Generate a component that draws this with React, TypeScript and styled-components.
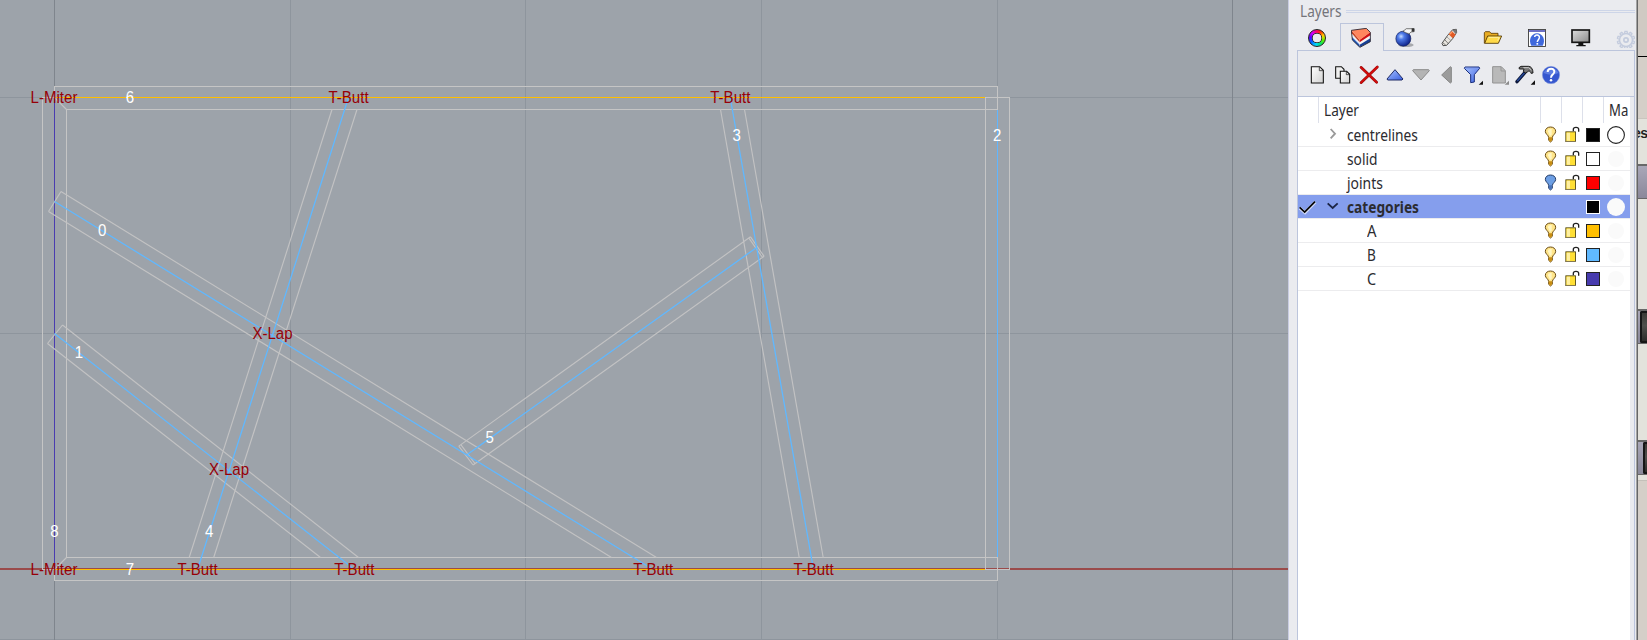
import React from "react";
import styled, { createGlobalStyle, css } from "styled-components";

const GlobalStyle = createGlobalStyle`
  * { box-sizing: border-box; }
  html, body { margin: 0; padding: 0; overflow: hidden; }
  svg { display: block; flex: none; }
`;

const uiFont = `"Noto Sans", "Open Sans", sans-serif`;

const Screen = styled.div`
  display: flex;
  width: 1647px;
  height: 640px;
  overflow: hidden;
  background: #eaebef;
  font-family: ${uiFont};
`;

const Viewport = styled.main`
  width: 1288px;
  height: 640px;
  background: #9da3aa;
`;

const Drawing = styled.svg`
  font-family: "Liberation Sans", Arial, sans-serif;
  font-size: 15.6px;
`;

/* ---------- model view ---------- */

type Line = [number, number, number, number];

const GRID_X = [290, 525, 761, 997];
const GRID_Y = [97, 333, 639];

const solidEdges: Line[] = [
  [54, 86, 997, 86], [997, 86, 997, 109], [66, 109, 997, 109], [54, 86, 54, 97],
  [42, 97, 54, 97], [42, 97, 42, 569], [66, 109, 66, 557], [42, 569, 54, 569],
  [66, 557, 997, 557], [54, 580, 997, 580], [54, 569, 54, 580], [997, 557, 997, 580],
  [985, 97, 985, 569], [1009, 97, 1009, 569], [985, 97, 1009, 97], [985, 569, 1009, 569],
];

const slantedEdges: Line[] = [
  [54, 97, 66, 109], [66, 557, 54, 569],
  [60.5, 191, 656, 557], [48, 211, 611, 557], [60.5, 191, 48, 211],
  [62, 324.5, 358, 557], [47, 343, 320, 557], [62, 324.5, 47, 343],
  [331.5, 109, 188.7, 557], [356.5, 109, 213.2, 557],
  [720, 109, 798.7, 557], [744, 109, 822.7, 557],
  [750, 236.3, 458.3, 445.6], [763.6, 255.8, 472.6, 464.5],
  [750, 236.3, 763.6, 255.8], [748.4, 237.7, 762, 257],
  [458.3, 445.6, 472.6, 464.5], [460.3, 444.2, 474.5, 463.2],
];

const centreLines: Line[] = [
  [54, 201, 652.5, 569], [54, 333, 354, 569], [348, 97, 197, 569],
  [729.7, 97, 813, 569], [756.5, 246.7, 465.7, 454.7],
];

const joints: [string, number, number][] = [
  ["L-Miter", 54, 103], ["T-Butt", 348.5, 103], ["T-Butt", 730.3, 103],
  ["X-Lap", 272.5, 339], ["X-Lap", 229, 474.5],
  ["L-Miter", 54, 574.5], ["T-Butt", 197.5, 574.5], ["T-Butt", 354.3, 574.5],
  ["T-Butt", 653.2, 574.5], ["T-Butt", 813.5, 574.5],
];

const members: [string, number, number][] = [
  ["0", 102.3, 236], ["1", 79, 357.5], ["2", 997.3, 141], ["3", 736.8, 141],
  ["4", 209.3, 537], ["5", 489.7, 443], ["6", 130, 103], ["7", 130, 574.5], ["8", 54.5, 537],
];

const seg = ([x1, y1, x2, y2]: Line) => `M${x1 + 0.5} ${y1 + 0.5}L${x2 + 0.5} ${y2 + 0.5}`;
const path = (lines: Line[]) => lines.map(seg).join("");
const LABEL_STRETCH = 0.965;

const Tag = ({ t, x, y }: { t: string; x: number; y: number }) => (
  <text transform={`translate(${x} ${y}) scale(${LABEL_STRETCH} 1)`}>{t}</text>
);

function ModelView() {
  return (
    <Viewport>
      <Drawing width="1288" height="640" viewBox="0 0 1288 640" fill="none">
        <g shapeRendering="crispEdges">
          <path stroke="#8e959d" d={path([...GRID_X.map((x): Line => [x, -1, x, 640]), ...GRID_Y.map((y): Line => [-1, y, 1288, y])])} />
          <path stroke="#7f858d" d="M54.5 0V640M1232.5 0V640" />
          <path stroke="#9a4b4b" strokeWidth="2" d="M0 569H1288" />
          <path stroke="#4a3cb0" d="M54.5 97V569" />
          <path stroke="#60b6ff" d="M997.5 109V557" />
          <path stroke="#ffbf00" d="M54 97.5H985M54 569.5H985" />
          <path stroke="#c5c5c5" strokeLinecap="square" d={path(solidEdges)} />
        </g>
        <path stroke="#c2c2c3" strokeWidth="1.15" d={path(slantedEdges)} />
        <path stroke="#60b8ff" strokeWidth="1.3" d={path(centreLines)} />
        <g fill="#960008" textAnchor="middle">
          {joints.map(([t, x, y], i) => <Tag key={i} t={t} x={x} y={y} />)}
        </g>
        <g fill="#ffffff" textAnchor="middle">
          {members.map(([t, x, y]) => <Tag key={t} t={t} x={x} y={y} />)}
        </g>
      </Drawing>
    </Viewport>
  );
}

/* ---------- tab icons (60 x 60 units) ---------- */

const TabSvg = ({ children }: { children: React.ReactNode }) => (
  <svg width="20" height="20" viewBox="0 0 60 60" fill="none">{children}</svg>
);

const Wheel = styled.div`
  width: 18px;
  height: 18px;
  margin-top: 1px;
  border-radius: 50%;
  border: 1px solid #222;
  background:
    radial-gradient(circle, #eaebef 0 4.2px, #333 4.6px 4.9px, transparent 5.4px),
    conic-gradient(#ff0060, #ff3000 30deg, #ffd000 70deg, #60f000 110deg, #00e070 150deg, #00d8ff 190deg, #0060ff 235deg, #5a00ff 275deg, #d000ff 315deg, #ff0060);
`;

const LayersIcon = () => (
  <TabSvg>
    <path d="M1 7L26 36V58L4 35Z" fill="#e9edf5" />
    <path d="M1 7L26 36V43L2 16Z" fill="#c9421f" />
    <path d="M3 27L26 50V58L4 36Z" fill="#2058bb" />
    <path d="M26 36L58 13V40L26 58Z" fill="#f5f5f5" />
    <path d="M26 35L58 12V22L26 43Z" fill="#cf1014" />
    <path d="M26 50L58 31V41L26 58Z" fill="#163f96" />
    <path d="M1 7L46 1L58 13L26 36Z" fill="#ff865e" />
    <path d="M1 7L46 1L58 13V41L27 58L4 36Z" stroke="#262430" strokeWidth="2.600" strokeLinejoin="round" />
  </TabSvg>
);

const SphereIcon = () => (
  <TabSvg>
    <defs>
      <radialGradient id="ball" cx=".35" cy=".35" r=".7">
        <stop offset="0" stopColor="#c8dcff" /><stop offset=".3" stopColor="#4f7be8" /><stop offset="1" stopColor="#0b1f86" />
      </radialGradient>
    </defs>
    <ellipse cx="33" cy="51" rx="23" ry="6" fill="#8b8d92" opacity=".7" />
    <circle cx="25" cy="32" r="22.5" fill="url(#ball)" stroke="#14235e" strokeWidth="2" />
    <path d="M24 10L34 2H57V11L48 12L42 18L32 14Z" fill="#eee" stroke="#333" strokeWidth="1.800" />
    <path d="M50 1H58V11H50Z" fill="#333" />
    <path d="M36 6H49L44 12H32Z" fill="#fafafa" />
  </TabSvg>
);

const TubeIcon = () => (
  <TabSvg>
    <path d="M9 46L26 22L41 5L52 4L53 13L41 32L23 52L12 53Z" fill="#e9e6e0" stroke="#333" strokeWidth="2.500" />
    <path d="M29 19L38 9L50 20L41 31Z" fill="#e25a24" />
    <path d="M32 19L39 12" stroke="#ff9a66" strokeWidth="4" />
    <path d="M40 6L52 4L53 12L49 17Z" fill="#777" />
    <path d="M17 35L28 47M11 44L20 51" stroke="#444" strokeWidth="2" />
    <path d="M24 27L36 38" stroke="#888" strokeWidth="2" />
  </TabSvg>
);

const FolderIcon = () => (
  <TabSvg>
    <path d="M4 46V14L7 11H20L24 16H45V24H55" fill="#e8ac22" />
    <path d="M4 46V14L7 11H20L24 16H45V25" stroke="#5b3b00" strokeWidth="2.500" />
    <path d="M14 24H56L46 46H5Z" fill="#ffda4a" stroke="#4a3000" strokeWidth="2.500" />
    <path d="M17 28H49L44 38" stroke="#fff0a0" strokeWidth="3" />
  </TabSvg>
);

const HelpWindowIcon = () => (
  <TabSvg>
    <rect x="4.500" y="4.500" width="51" height="51" fill="#fff" stroke="#333" strokeWidth="2.600" />
    <path d="M6 6H54V12H6Z" fill="#6d70c4" />
    <path d="M13 53C3 36 13 16 30 16S57 36 47 53Z" fill="#3f68dc" />
    <path d="M23 27C24 19 38 19 37 29C36 36 31 36 31 42" stroke="#fff" strokeWidth="4.500" />
    <rect x="28.500" y="45" width="5" height="5" fill="#fff" />
  </TabSvg>
);

const MonitorIcon = () => (
  <TabSvg>
    <defs>
      <linearGradient id="screen" x1="0" y1="0" x2="1" y2="1">
        <stop offset="0" stopColor="#ddd" /><stop offset="1" stopColor="#8b8b8b" />
      </linearGradient>
    </defs>
    <path d="M22 44H37V51H44V55H16V51H22Z" fill="#141414" />
    <rect x="3" y="6" width="52" height="37" fill="url(#screen)" stroke="#161616" strokeWidth="5" />
  </TabSvg>
);

const GearIcon = () => (
  <TabSvg>
    <g transform="translate(33 36)" stroke="#c3cbdd">
      {Array.from({ length: 10 }, (_, i) => (
        <path key={i} d="M-4.500-21L-3-26H3L4.500-21" strokeWidth="4" transform={`rotate(${i * 36})`} />
      ))}
      <circle r="19.500" strokeWidth="4.500" />
      <circle r="6.500" strokeWidth="5" />
    </g>
  </TabSvg>
);

/* ---------- toolbar icons (78 x 60 units) ---------- */

const ToolSvg = ({ children }: { children: React.ReactNode }) => (
  <svg width="26" height="20" viewBox="0 0 78 60" fill="none">{children}</svg>
);

const ToolDefs = () => (
  <defs>
    <linearGradient id="paper" x1="0" y1="0" x2="1" y2="1"><stop offset="0" stopColor="#fff" /><stop offset="1" stopColor="#d2d2d2" /></linearGradient>
    <linearGradient id="blue" x1="0" y1="0" x2="1" y2="1"><stop offset="0" stopColor="#a9c4ff" /><stop offset="1" stopColor="#3a5fe0" /></linearGradient>
  </defs>
);

const NewIcon = () => (
  <ToolSvg><ToolDefs />
    <path d="M22 5H47L58 16V54H22Z" fill="url(#paper)" stroke="#111" strokeWidth="3.200" />
    <path d="M46 6V17H57" stroke="#333" strokeWidth="2.500" />
  </ToolSvg>
);
const CopyIcon = () => (
  <ToolSvg>
    <path d="M17 5H34L42 13V40H17Z" fill="#efefef" stroke="#111" strokeWidth="3.200" />
    <path d="M31 19H50L59 28V54H31Z" fill="url(#paper)" stroke="#111" strokeWidth="3.200" />
    <path d="M49 20V29H58" stroke="#333" strokeWidth="2.500" />
  </ToolSvg>
);
const DeleteIcon = () => (
  <ToolSvg>
    <path d="M15 7L62 52M64 6L15 53" stroke="#8b0a0a" strokeWidth="8" strokeLinecap="round" />
    <path d="M15 7L62 52M64 6L15 53" stroke="#d40c0c" strokeWidth="5.500" strokeLinecap="round" />
  </ToolSvg>
);
const UpIcon = () => <ToolSvg><path d="M39 14L63 42L60 45H17L15 42Z" fill="url(#blue)" stroke="#1e2a66" strokeWidth="3" strokeLinejoin="round" /></ToolSvg>;
const DownIcon = () => <ToolSvg><path d="M14 17L16 14H62L64 17L39 45Z" fill="#b4b4b4" stroke="#8b8b8b" strokeWidth="3" strokeLinejoin="round" /></ToolSvg>;
const BackIcon = () => <ToolSvg><path d="M23 30L49 5L52 7V52L49 54Z" fill="#9b9b9b" stroke="#868686" strokeWidth="3" strokeLinejoin="round" /></ToolSvg>;
const FilterIcon = () => (
  <ToolSvg>
    <path d="M15 6H57L59 10L43 29V51L32 53V29L13 10Z" fill="url(#blue)" stroke="#1b2f7c" strokeWidth="3" strokeLinejoin="round" />
    <path d="M16 10H56" stroke="#7f9af0" strokeWidth="3" />
    <path d="M69 47V59H56Z" fill="#111" />
  </ToolSvg>
);
const StateIcon = () => (
  <ToolSvg>
    <path d="M20 5H46L58 17V54H20Z" fill="#b9b9b9" stroke="#929292" strokeWidth="3" />
    <path d="M45 6V18H57" stroke="#929292" strokeWidth="2.500" />
    <path d="M69 47V59H56Z" fill="#8b8b8b" />
  </ToolSvg>
);
const HammerIcon = () => (
  <ToolSvg>
    <path d="M15 50L39 22" stroke="#0d1738" strokeWidth="10" strokeLinecap="round" />
    <path d="M16 48L38 23" stroke="#24499c" strokeWidth="4" />
    <path d="M21 8L27 4H50C58 5 63 12 63 24L57 25C55 18 51 16 46 21L40 24L34 19L36 12H22Z" fill="#777" stroke="#1c1c1c" strokeWidth="3" strokeLinejoin="round" />
    <path d="M34 8H50L58 15" stroke="#c9c9c9" strokeWidth="3" />
    <path d="M69 46V59H56Z" fill="#111" />
  </ToolSvg>
);
const HelpIcon = () => (
  <ToolSvg>
    <circle cx="39" cy="30" r="26" fill="#3657cf" stroke="#8fa2dc" strokeWidth="1.500" />
    <path d="M17 24A23 20 0 0 1 61 24Q40 34 17 24Z" fill="#7f9cf0" opacity=".55" />
    <path d="M29 21C29 8 50 8 49 21C48 29 39 29 39 38" stroke="#fff" strokeWidth="6" />
    <circle cx="39" cy="46" r="3.800" fill="#fff" />
  </ToolSvg>
);

/* ---------- layers panel ---------- */

const Panel = styled.aside`
  display: flex;
  flex-direction: column;
  width: 348px;
  height: 640px;
  padding-left: 8px;
  border-left: 1px solid #c9cce2;
  background: #eaebef;
`;

const TitleBar = styled.header`
  display: flex;
  align-items: flex-start;
  height: 22px;
  padding-left: 3px;
`;

const Title = styled.span`
  width: 46px;
  font-size: 16px;
  line-height: 23px;
  color: #74747a;
  white-space: nowrap;
  transform: scaleX(0.85);
  transform-origin: 0 50%;
`;

const TitleRule = styled.div`
  flex: 1;
  height: 3px;
  margin: 10px 1px 0 0;
  border: solid #cdd5e8;
  border-width: 1px 0;
`;

const TabStrip = styled.nav`
  display: flex;
  height: 28px;
  margin-left: -2px;
  overflow: hidden;
`;

const Tab = styled.div<{ $active?: boolean }>`
  position: relative;
  display: flex;
  flex: none;
  align-items: flex-start;
  justify-content: center;
  width: 44px;
  padding-top: 6px;
  ${(p) => p.$active && css`
    &::before {
      content: "";
      position: absolute;
      inset: 1px -1px 0 1px;
      border: 1px solid #bcc5dc;
      border-bottom: 0;
    }
  `}
`;

const TabPage = styled.section`
  display: flex;
  flex-direction: column;
  flex: 1;
  width: 338px;
  border: 1px solid #bcc5dc;
  border-width: 1px 1px 0 1px;
`;

/* Hides the page border under the active tab. */
const TabGap = styled.div`
  width: 42px;
  height: 1px;
  margin: -1px 0 0 43px;
  background: #eaebef;
`;

const Toolbar = styled.div`
  display: flex;
  height: 45px;
  padding: 14px 0 0 6px;
`;

const ListFrame = styled.div`
  display: flex;
  flex: 1;
  border-top: 1px solid #bcc5dc;
`;

const ListBody = styled.div`
  width: 332px;
  background: #fff;
`;

const rowGrid = css`
  display: grid;
  grid-template-columns: 21px 222px 21px 21px 21px 26px;
`;

const HeaderRow = styled.div`
  ${rowGrid}
  height: 26px;
`;

const HeaderCell = styled.div`
  height: 26px;
  padding-left: 5px;
  overflow: hidden;
  border-right: 1px solid #dde0ea;
  &:last-child { border-right: 0; }
`;

const Label = styled.span<{ $bold?: boolean; $scale?: number; $line?: number }>`
  display: inline-block;
  font-size: ${(p) => (p.$bold ? 15.5 : 16)}px;
  font-weight: ${(p) => (p.$bold ? 700 : 400)};
  line-height: ${(p) => p.$line ?? 23}px;
  color: #2b2b30;
  white-space: nowrap;
  transform: scaleX(${(p) => p.$scale ?? 0.85});
  transform-origin: 0 50%;
`;

const Row = styled.div<{ $selected?: boolean }>`
  ${rowGrid}
  align-items: center;
  height: 24px;
  border-bottom: 1px solid #ececee;
  background: ${(p) => (p.$selected ? "#859eed" : "#fff")};
`;

const NameCell = styled.div<{ $depth: number }>`
  display: flex;
  align-items: flex-start;
  height: 23px;
  padding-left: ${(p) => 6 + p.$depth * 20}px;

  ${Label} { padding-top: 1px; }
`;

const Expander = styled.div`
  width: 22px;
  height: 23px;
`;

const IconCell = styled.div<{ $shift?: number }>`
  display: flex;
  align-items: center;
  justify-content: center;
  height: 23px;
  padding-right: ${(p) => (p.$shift ?? 0) * 2}px;
`;

const Swatch = styled.div<{ $color: string; $selected?: boolean }>`
  flex: none;
  width: 14px;
  height: 14px;
  border: 1px solid ${(p) => (p.$selected ? "#fff" : "#222")};
  background: ${(p) => p.$color};
`;

type Kind = "ring" | "faint" | "solid";

const Material = ({ kind }: { kind: Kind }) => (
  <svg width="18" height="18" viewBox="0 0 18 18">
    {kind === "ring"
      ? <circle cx="9" cy="9" r="8.400" fill="#fff" stroke="#222" strokeWidth="1.1" />
      : <circle cx="9" cy="9" r={kind === "solid" ? 9 : 8} fill="#fafafa" />}
  </svg>
);

interface Layer {
  name: string;
  color: string;
  depth: number;
  bulb?: "on" | "off";
  kind: Kind;
  expand?: "open" | "closed";
  selected?: boolean;
  scale: number;
}

const layers: Layer[] = [
  { name: "centrelines", color: "#000", depth: 0, bulb: "on", kind: "ring", expand: "closed", scale: 0.86 },
  { name: "solid", color: "#fff", depth: 0, bulb: "on", kind: "faint", scale: 0.86 },
  { name: "joints", color: "#f00", depth: 0, bulb: "off", kind: "faint", scale: 0.87 },
  { name: "categories", color: "#000", depth: 0, kind: "solid", expand: "open", selected: true, scale: 0.885 },
  { name: "A", color: "#ffbf00", depth: 1, bulb: "on", kind: "faint", scale: 0.93 },
  { name: "B", color: "#60b9ff", depth: 1, bulb: "on", kind: "faint", scale: 0.85 },
  { name: "C", color: "#473bae", depth: 1, bulb: "on", kind: "faint", scale: 0.9 },
];

const Bulb = ({ on }: { on: boolean }) => (
  <svg width="13" height="17" viewBox="0 0 39 51" fill="none">
    <path d="M14 34C13 27 4 24 4 16C4 8 11 3 19.500 3S35 8 35 16C35 24 26 27 25 34V43L19.500 48L14 43Z" fill={on ? "#ffe58a" : "#6d9fe4"} stroke={on ? "#6b4c13" : "#253c66"} strokeWidth="3" />
    {on && <path d="M12 16C12 10 17 8 23 9V26L18 30Z" fill="#fff6c4" />}
    <path d="M14.500 34H24.500V42L19.500 47L14.500 42Z" fill={on ? "#c98d12" : "#4a73b8"} />
  </svg>
);

const Lock = () => (
  <svg width="15" height="17" viewBox="0 0 45 51" fill="none">
    <path d="M25 16V10C25 2 41 2 41 10V17" stroke="#222" strokeWidth="4" />
    <rect x="2.500" y="17.500" width="29" height="29" fill="#ffdf35" stroke="#4d4310" strokeWidth="2.600" />
    <rect x="5" y="20" width="10" height="24" fill="#fff0a0" />
    <path d="M1 46.500H33" stroke="#857950" strokeWidth="3" />
  </svg>
);

const Check = () => (
  <svg width="20" height="16" viewBox="0 0 60 48" fill="none">
    <path d="M5 27L21 41L52 9" stroke="#fff" strokeWidth="9" opacity=".65" />
    <path d="M5 25L20 39L51 8" stroke="#050505" strokeWidth="5" />
  </svg>
);

const Chevron = ({ open }: { open: boolean }) => (
  <svg width="16" height="20" viewBox="0 0 48 60" fill="none">
    {open
      ? <path d="M8 25L23 39L38 25" stroke="#1c2545" strokeWidth="5.500" />
      : <path d="M17 18L30 32L17 46" stroke="#9a9a9a" strokeWidth="5.500" />}
  </svg>
);

function LayersPanel() {
  const tabs = [Wheel, LayersIcon, SphereIcon, TubeIcon, FolderIcon, HelpWindowIcon, MonitorIcon, GearIcon];
  return (
    <Panel>
      <TitleBar><Title>Layers</Title><TitleRule /></TitleBar>
      <TabStrip>
        {tabs.map((Icon, i) => <Tab key={i} $active={i === 1}><Icon /></Tab>)}
      </TabStrip>
      <TabPage>
        <TabGap />
        <Toolbar>
          <NewIcon /><CopyIcon /><DeleteIcon /><UpIcon /><DownIcon /><BackIcon />
          <FilterIcon /><StateIcon /><HammerIcon /><HelpIcon />
        </Toolbar>
        <ListFrame>
          <ListBody>
            <HeaderRow>
              <HeaderCell />
              <HeaderCell><Label $line={27}>Layer</Label></HeaderCell>
              <HeaderCell /><HeaderCell /><HeaderCell />
              <HeaderCell><Label $line={27} $scale={0.82}>Ma</Label></HeaderCell>
            </HeaderRow>
            {layers.map((l) => (
              <Row key={l.name} $selected={l.selected}>
                <IconCell $shift={1}>{l.selected && <Check />}</IconCell>
                <NameCell $depth={l.depth}>
                  <Expander>{l.expand && <Chevron open={l.expand === "open"} />}</Expander>
                  <Label $bold={l.selected} $scale={l.scale}>{l.name}</Label>
                </NameCell>
                <IconCell $shift={1}>{l.bulb && <Bulb on={l.bulb === "on"} />}</IconCell>
                <IconCell>{l.bulb && <Lock />}</IconCell>
                <IconCell $shift={1}><Swatch $color={l.color} $selected={l.selected} /></IconCell>
                <IconCell $shift={1}><Material kind={l.kind} /></IconCell>
              </Row>
            ))}
          </ListBody>
        </ListFrame>
      </TabPage>
    </Panel>
  );
}

/* ---------- sliver of the window behind ---------- */

const Edge = styled.aside`
  display: flex;
  flex-direction: column;
  width: 11px;
  height: 640px;
  overflow: hidden;
  border-left: 1px solid #a3a3a3;
  box-shadow: inset 1px 0 0 #666;
  padding-left: 1px;
  background: #d5cfc8;
`;

const Block = styled.div<{ $h: number; $bg: string; $line?: string }>`
  flex: none;
  height: ${(p) => p.$h}px;
  background: ${(p) => p.$bg};
  ${(p) => p.$line && css`border-bottom: 1px solid ${p.$line};`}
`;

const ClippedText = styled(Block)`
  overflow: hidden;
  font: bold 14px/28px "Liberation Sans", Arial, sans-serif;
  letter-spacing: -0.5px;
  color: #222;
  text-indent: -5px;
  white-space: nowrap;
`;

const Band = styled.div<{ $inset: number }>`
  flex: none;
  height: 35px;
  padding-left: ${(p) => p.$inset}px;
  border: solid #686868;
  border-width: 2px 0 1px;
  background: linear-gradient(#a9a7b8, #8a889a);
`;

const DarkButton = styled.div`
  height: 32px;
  border: 2px solid #161616;
  border-right: 0;
  border-radius: 2px 0 0 2px;
  background: linear-gradient(#3a3a36, #50504c 45%, #2c2c2a);
`;

function WindowEdge() {
  return (
    <Edge>
      <Block $h={57} $bg="#d0cac3" $line="#000" />
      <Block $h={62} $bg="#d5cfc8" $line="#c9c5be" />
      <ClippedText $h={45} $bg="#e3e2dc">es</ClippedText>
      <Band $inset={12} />
      <Block $h={110} $bg="#e3e2dc" />
      <Band $inset={2}><DarkButton /></Band>
      <Block $h={96} $bg="#e3e2dc" />
      <Band $inset={5}><DarkButton /></Band>
      <Block $h={6} $bg="#e3e2dc" $line="#c4c0b9" />
    </Edge>
  );
}

export default function App() {
  return (
    <>
      <GlobalStyle />
      <Screen>
        <ModelView />
        <LayersPanel />
        <WindowEdge />
      </Screen>
    </>
  );
}
